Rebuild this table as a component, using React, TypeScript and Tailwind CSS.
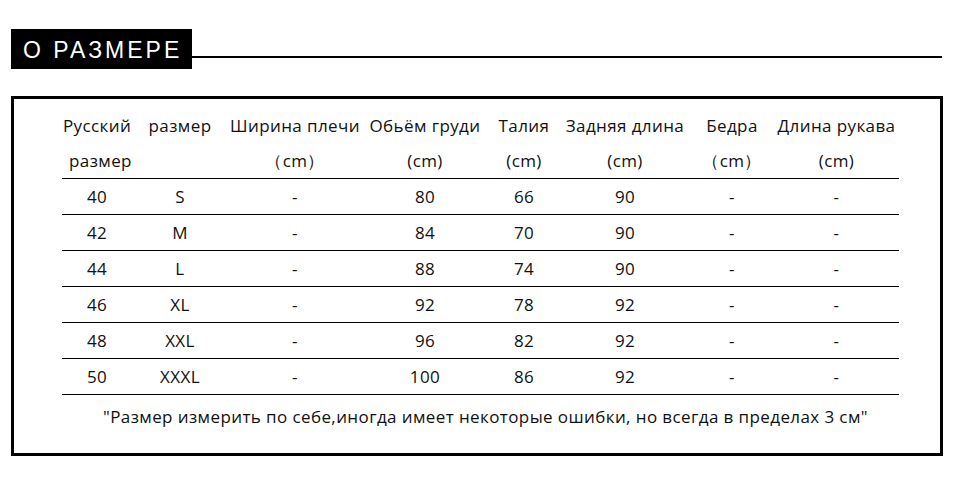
const cols = [
  "w-[70px]",
  "w-[96px]",
  "w-[134px]",
  "w-[126px]",
  "w-[72px]",
  "w-[130px]",
  "w-[84px]",
  "w-[125px]",
]

const headTop = ["Русский", "размер", "Ширина плечи", "Обьём груди", "Талия", "Задняя длина", "Бедра", "Длина рукава"]
const headBottom = ["размер", "", "（cm）", "(cm)", "(cm)", "(cm)", "（cm）", "(cm)"]

const rows = [
  ["40", "S", "-", "80", "66", "90", "-", "-"],
  ["42", "M", "-", "84", "70", "90", "-", "-"],
  ["44", "L", "-", "88", "74", "90", "-", "-"],
  ["46", "XL", "-", "92", "78", "92", "-", "-"],
  ["48", "XXL", "-", "96", "82", "92", "-", "-"],
  ["50", "XXXL", "-", "100", "86", "92", "-", "-"],
]

function Row({ cells, className }: { cells: string[]; className: string }) {
  return (
    <div className={`flex items-center ${className}`}>
      {cells.map((c, i) => (
        <div key={i} className={`${cols[i]} shrink-0 text-center whitespace-nowrap`}>
          {c}
        </div>
      ))}
    </div>
  )
}

export default function App() {
  return (
    <div className="w-[960px] h-[500px] bg-white overflow-hidden font-['Open_Sans',sans-serif] text-[#111]">
      <div className="flex items-start pt-[29px] pl-[11px] pr-[18px]">
        <div className="h-[40px] w-[181px] bg-black text-white flex items-center pl-[12px] pt-[2px] text-[23px] leading-none font-['Liberation_Sans',sans-serif] tracking-[3px] whitespace-nowrap">
          О РАЗМЕРЕ
        </div>
        <div className="flex-1 h-[2px] mt-[27px] bg-black" />
      </div>

      <div className="ml-[11px] mt-[27px] w-[932px] h-[360px] border-[3px] border-black pl-[48px] pt-[9px] text-[17px] tracking-[0.4px]">
        <div className="w-[837px]">
          <Row cells={headTop} className="h-[36px]" />
          <div className="flex items-center h-[35px] border-b border-black">
            <div className={`${cols[0]} shrink-0 pl-[7px] whitespace-nowrap`}>{headBottom[0]}</div>
            {headBottom.slice(1).map((c, i) => (
              <div key={i} className={`${cols[i + 1]} shrink-0 text-center whitespace-nowrap`}>
                {c}
              </div>
            ))}
          </div>
          {rows.map((r, i) => (
            <Row key={i} cells={r} className="h-[36px] border-b border-black" />
          ))}
        </div>
        <div className="w-[837px] text-center mt-[9px] pl-[10px] whitespace-nowrap">
          "Размер измерить по себе,иногда имеет некоторые ошибки, но всегда в пределах 3 см"
        </div>
      </div>
    </div>
  )
}
